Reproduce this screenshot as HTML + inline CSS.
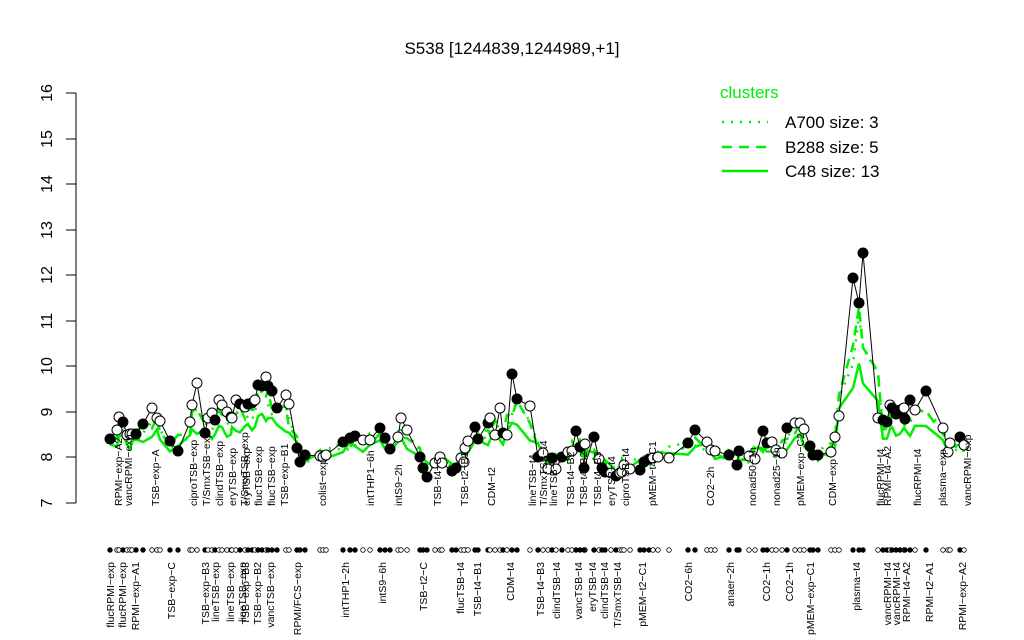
<!DOCTYPE html>
<html><head><meta charset="utf-8"><style>
html,body{margin:0;padding:0;background:#fff;width:1024px;height:640px;overflow:hidden}
svg{display:block;font-family:"Liberation Sans",sans-serif}
</style></head><body>
<svg id="s" width="1024" height="640" viewBox="0 0 1024 640" xmlns="http://www.w3.org/2000/svg">
<rect width="1024" height="640" fill="#fff"/>
<text x="512" y="54" font-size="17" text-anchor="middle">S538 [1244839,1244989,+1]</text>
<g stroke="#000" stroke-width="1">
<line x1="76" y1="93" x2="76" y2="503"/>
<line x1="66" y1="93" x2="76" y2="93"/><line x1="66" y1="139" x2="76" y2="139"/><line x1="66" y1="184" x2="76" y2="184"/><line x1="66" y1="230" x2="76" y2="230"/><line x1="66" y1="275" x2="76" y2="275"/><line x1="66" y1="321" x2="76" y2="321"/><line x1="66" y1="366" x2="76" y2="366"/><line x1="66" y1="412" x2="76" y2="412"/><line x1="66" y1="457" x2="76" y2="457"/><line x1="66" y1="503" x2="76" y2="503"/>
</g>
<g font-size="16" text-anchor="middle">
<text transform="translate(52,93) rotate(-90)">16</text><text transform="translate(52,139) rotate(-90)">15</text><text transform="translate(52,184) rotate(-90)">14</text><text transform="translate(52,230) rotate(-90)">13</text><text transform="translate(52,275) rotate(-90)">12</text><text transform="translate(52,321) rotate(-90)">11</text><text transform="translate(52,366) rotate(-90)">10</text><text transform="translate(52,412) rotate(-90)">9</text><text transform="translate(52,457) rotate(-90)">8</text><text transform="translate(52,503) rotate(-90)">7</text>
</g>
<g id="plot"></g>
<g font-size="10.5">
<text transform="translate(122,506) rotate(-90)">RPMI−exp−A2</text><text transform="translate(132,506) rotate(-90)">vancRPMI−exp</text><text transform="translate(159,506) rotate(-90)">TSB−exp−A</text><text transform="translate(197,506) rotate(-90)">ciproTSB−exp</text><text transform="translate(210,506) rotate(-90)">T/SmxTSB−exp</text><text transform="translate(223,506) rotate(-90)">clindTSB−exp</text><text transform="translate(236,506) rotate(-90)">eryTSB−exp</text><text transform="translate(248,506) rotate(-90)">T/SmxTSB−exp</text><text transform="translate(250,506) rotate(-90)">eryTSB−exp</text><text transform="translate(262,506) rotate(-90)">flucTSB−exp</text><text transform="translate(275,506) rotate(-90)">flucTSB−exp</text><text transform="translate(288,506) rotate(-90)">TSB−exp−B1</text><text transform="translate(326,506) rotate(-90)">colist−exp</text><text transform="translate(374,506) rotate(-90)">intTHP1−6h</text><text transform="translate(402,506) rotate(-90)">intS9−2h</text><text transform="translate(441,506) rotate(-90)">TSB−t4−C</text><text transform="translate(468,506) rotate(-90)">TSB−t2−B1</text><text transform="translate(495,506) rotate(-90)">CDM−t2</text><text transform="translate(536,506) rotate(-90)">lineTSB−t4</text><text transform="translate(547,506) rotate(-90)">T/SmxTSB−t4</text><text transform="translate(557,506) rotate(-90)">lineTSB−t4</text><text transform="translate(574,506) rotate(-90)">TSB−t4−B2</text><text transform="translate(587,506) rotate(-90)">TSB−t4−B2</text><text transform="translate(601,506) rotate(-90)">TSB−t4−B3</text><text transform="translate(615,506) rotate(-90)">eryTSB−t4</text><text transform="translate(629,506) rotate(-90)">ciproTSB−t4</text><text transform="translate(656,506) rotate(-90)">pMEM−t4−C1</text><text transform="translate(714,506) rotate(-90)">CO2−2h</text><text transform="translate(756,506) rotate(-90)">nonad50−1h</text><text transform="translate(780,506) rotate(-90)">nonad25−1h</text><text transform="translate(804,506) rotate(-90)">pMEM−exp−C2</text><text transform="translate(836,506) rotate(-90)">CDM−exp</text><text transform="translate(884,506) rotate(-90)">flucRPMI−t4</text><text transform="translate(891,506) rotate(-90)">RPMI−t4−A2</text><text transform="translate(921,506) rotate(-90)">flucRPMI−t4</text><text transform="translate(946,506) rotate(-90)">plasma−exp</text><text transform="translate(971,506) rotate(-90)">vancRPMI−exp</text>
</g>
<g font-size="10.5" text-anchor="end">
<text transform="translate(114,562) rotate(-90)">flucRPMI−exp</text><text transform="translate(126,562) rotate(-90)">flucRPMI−exp</text><text transform="translate(139,562) rotate(-90)">RPMI−exp−A1</text><text transform="translate(175,562) rotate(-90)">TSB−exp−C</text><text transform="translate(209,562) rotate(-90)">TSB−exp−B3</text><text transform="translate(219,562) rotate(-90)">lineTSB−exp</text><text transform="translate(234,562) rotate(-90)">lineTSB−exp</text><text transform="translate(246,562) rotate(-90)">lineTSB−exp</text><text transform="translate(249,562) rotate(-90)">TSB−exp−B3</text><text transform="translate(261,562) rotate(-90)">TSB−exp−B2</text><text transform="translate(274,562) rotate(-90)">vancTSB−exp</text><text transform="translate(301,562) rotate(-90)">RPMI/FCS−exp</text><text transform="translate(349,562) rotate(-90)">intTHP1−2h</text><text transform="translate(386,562) rotate(-90)">intS9−6h</text><text transform="translate(427,562) rotate(-90)">TSB−t2−C</text><text transform="translate(464,562) rotate(-90)">flucTSB−t4</text><text transform="translate(481,562) rotate(-90)">TSB−t4−B1</text><text transform="translate(514,562) rotate(-90)">CDM−t4</text><text transform="translate(544,562) rotate(-90)">TSB−t4−B3</text><text transform="translate(560,562) rotate(-90)">clindTSB−t4</text><text transform="translate(582,562) rotate(-90)">vancTSB−t4</text><text transform="translate(596,562) rotate(-90)">eryTSB−t4</text><text transform="translate(608,562) rotate(-90)">clindTSB−t4</text><text transform="translate(621,562) rotate(-90)">T/SmxTSB−t4</text><text transform="translate(646,562) rotate(-90)">pMEM−t2−C1</text><text transform="translate(692,562) rotate(-90)">CO2−6h</text><text transform="translate(734,562) rotate(-90)">anaer−2h</text><text transform="translate(770,562) rotate(-90)">CO2−1h</text><text transform="translate(793,562) rotate(-90)">CO2−1h</text><text transform="translate(814,562) rotate(-90)">pMEM−exp−C1</text><text transform="translate(860,562) rotate(-90)">plasma−t4</text><text transform="translate(891,562) rotate(-90)">vancRPMI−t4</text><text transform="translate(900,562) rotate(-90)">vancRPMI−t4</text><text transform="translate(910,562) rotate(-90)">RPMI−t4−A2</text><text transform="translate(933,562) rotate(-90)">RPMI−t2−A1</text><text transform="translate(966,562) rotate(-90)">RPMI−exp−A2</text>
</g>
<text x="720" y="98" font-size="17" fill="#00ee00">clusters</text>
<line x1="722" y1="122" x2="768" y2="122" stroke="#00ee00" stroke-width="2.5" stroke-dasharray="2,7"/>
<line x1="722" y1="147" x2="768" y2="147" stroke="#00ee00" stroke-width="2.5" stroke-dasharray="10,7"/>
<line x1="722" y1="171" x2="768" y2="171" stroke="#00ee00" stroke-width="2.5"/>
<text x="785" y="128" font-size="17">A700 size: 3</text>
<text x="785" y="153" font-size="17">B288 size: 5</text>
<text x="785" y="177" font-size="17">C48 size: 13</text>
</svg>
<script>
var P=[[110,439,1],[117,430,0],[119,417,0],[123,422,1],[127,435,0],[130,434,0],[132,434,0],[136,434,1],[143,424,1],[152,408,0],[157,418,0],[160,421,0],[170,441,1],[178,451,1],[190,422,0],[192,405,0],[197,383,0],[205,433,1],[208,418,0],[212,413,0],[215,420,1],[219,400,0],[222,405,0],[227,412,0],[231,417,1],[232,418,0],[236,400,0],[240,404,1],[245,407,0],[248,404,1],[252,403,1],[255,400,0],[258,385,1],[262,386,1],[266,377,0],[268,386,1],[272,391,1],[277,408,1],[286,395,0],[289,404,0],[297,448,1],[300,462,1],[305,455,1],[320,456,0],[323,457,0],[326,455,0],[343,442,1],[350,438,1],[355,436,1],[363,440,0],[370,440,0],[380,428,1],[385,438,1],[390,449,1],[398,437,0],[401,418,0],[407,430,0],[420,457,1],[423,468,1],[427,477,1],[435,463,0],[440,457,0],[442,463,0],[452,471,1],[456,468,1],[461,458,0],[465,448,0],[464,462,0],[468,441,0],[475,427,1],[478,439,1],[488,423,1],[490,418,0],[495,435,0],[500,408,0],[503,433,1],[507,435,0],[512,374,1],[517,399,1],[530,406,0],[538,457,1],[543,453,0],[548,469,0],[552,458,1],[556,469,0],[562,457,1],[568,452,0],[572,451,0],[576,431,1],[580,447,1],[585,444,0],[584,468,1],[594,437,1],[599,459,0],[602,468,1],[605,472,1],[611,473,0],[616,476,1],[620,473,0],[622,472,0],[624,465,0],[630,469,0],[640,470,1],[644,462,1],[649,459,1],[653,458,0],[658,457,0],[669,458,0],[688,443,1],[695,430,1],[707,442,0],[711,450,0],[715,451,0],[729,455,1],[737,465,1],[739,451,1],[749,456,0],[755,459,0],[763,431,1],[767,443,1],[772,442,0],[776,450,0],[782,453,0],[787,428,1],[795,423,0],[800,423,0],[804,429,0],[810,446,1],[813,455,1],[818,455,1],[831,452,0],[835,437,0],[839,416,0],[853,278,1],[859,303,1],[863,253,1],[878,418,0],[883,420,1],[887,422,1],[890,405,0],[892,408,1],[896,414,1],[900,410,1],[904,408,0],[905,419,1],[910,400,1],[915,410,0],[926,391,1],[943,428,0],[948,452,0],[950,443,0],[960,437,1],[964,445,0]];
var g=document.getElementById('plot'),h='',n=P.length;
function sm(k,a,off,w){var s='';for(var i=0;i<n;i++){var t=0,c=0;for(var j=Math.max(0,i-w);j<=Math.min(n-1,i+w);j++){t+=P[j][1];c++;}var y=(t/c)*k+457*(1-k)+off*Math.sin(i*a);s+=(i?'L':'M')+P[i][0]+','+y.toFixed(1);}return s;}
h+='<path d="'+sm(0.55,1.7,5,1)+'" fill="none" stroke="#00ee00" stroke-width="2.5"/>';
h+='<path d="'+sm(0.85,2.3,6,1)+'" fill="none" stroke="#00ee00" stroke-width="2.5" stroke-dasharray="10,7"/>';
h+='<path d="'+sm(0.8,1.1,7,1)+'" fill="none" stroke="#00ee00" stroke-width="2.5" stroke-dasharray="2,7"/>';
var d='';for(var i=0;i<n;i++)d+=(i?'L':'M')+P[i][0]+','+P[i][1];
h+='<path d="'+d+'" fill="none" stroke="#000" stroke-width="1"/>';
for(var i=0;i<n;i++){h+='<circle cx="'+P[i][0]+'" cy="'+P[i][1]+'" r="5" fill="'+(P[i][2]?'#000':'#fff')+'" stroke="#000" stroke-width="1"/>';
h+='<circle cx="'+P[i][0]+'" cy="550" r="2.3" fill="'+(P[i][2]?'#000':'#fff')+'" stroke="#000" stroke-width="0.8"/>';}
g.innerHTML=h;
</script>
</body></html>
